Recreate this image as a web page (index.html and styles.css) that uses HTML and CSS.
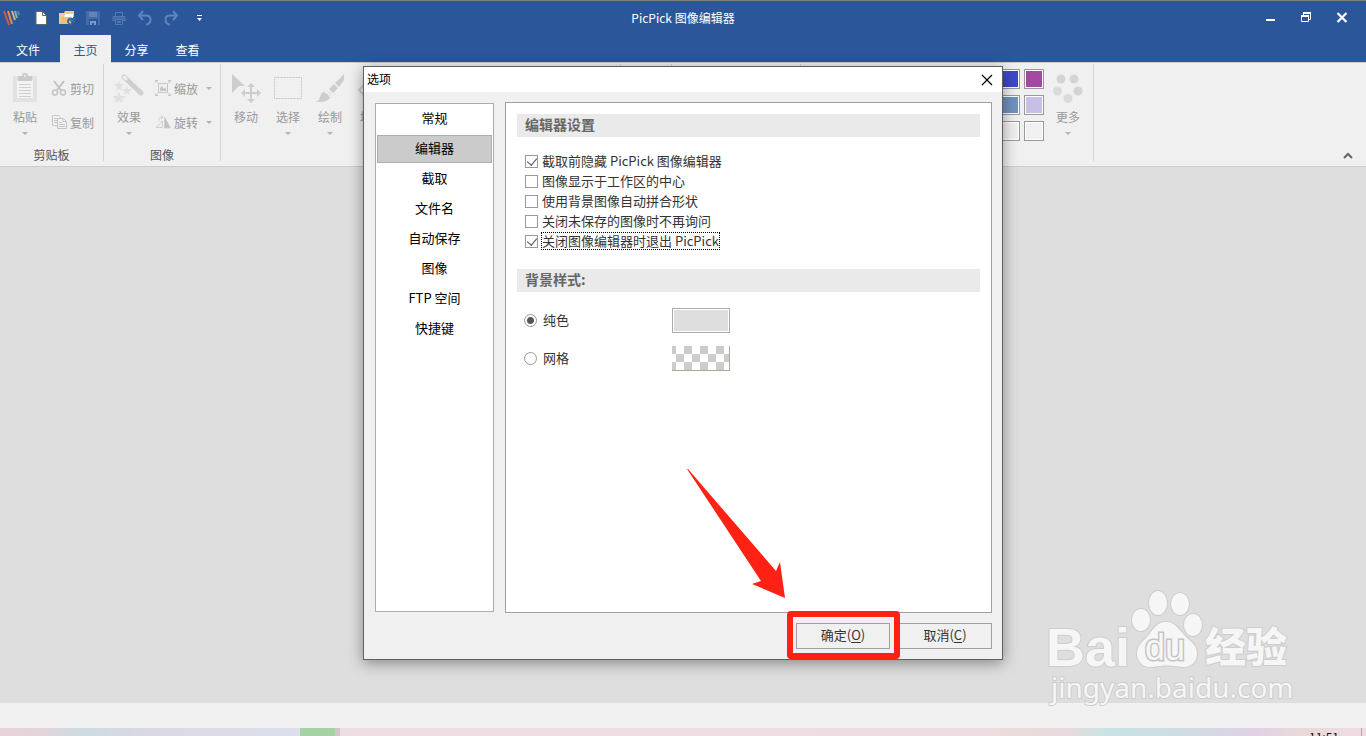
FILE: index.html
```html
<!DOCTYPE html>
<html lang="zh-CN">
<head>
    <meta charset="UTF-8">
    <meta name="viewport" content="width=device-width, initial-scale=1.0">
    <title>PicPick 图像编辑器</title>
    <link rel="stylesheet" href="styles.css">
</head>
<body>
    <header class="titlebar">
        <div class="quick-access">
            <svg class="app-logo" width="18" height="16" viewBox="0 0 18 16" fill="none" stroke-width="2">
                <path d="M2 1l5 14" stroke="#d9583b"/>
                <path d="M6 1l4 13" stroke="#e88a4a"/>
                <path d="M10 1l3 9" stroke="#c9b58c"/>
                <path d="M13 1l2 7" stroke="#7fb5a5"/>
                <path d="M16 1l1 4" stroke="#4f86b8"/>
            </svg>
            <button class="qa-btn" aria-label="新建"><svg width="16" height="16" viewBox="0 0 16 16"><path d="M3 1.500h6.500l4 4v9h-10.500z" fill="#fff" stroke="#666"/><path d="M9.500 1.500v4h4" fill="none" stroke="#666"/></svg></button>
            <button class="qa-btn" aria-label="打开"><svg width="18" height="16" viewBox="0 0 18 16"><path d="M1 14V3h5l1-2h9v6H5L2 14z" fill="#f1cd8a"/><path d="M7 4h8v4H6z" fill="#fff"/><path d="M5 7h9l-1 7H1z" fill="#eec17a"/><path d="M9 12c0-5 4-5 6-3l2-2v5h-5l1-1c-2-1-2 0-2 1 1 2 4 2 6 0-2 4-7 3-8 0z" fill="#2f6da8"/></svg></button>
            <button class="qa-btn" aria-label="保存"><svg width="16" height="16" viewBox="0 0 16 16"><path d="M1 1h14v14H1z" fill="#456ba9"/><path d="M4 2h8v5H4z" fill="#6283b8"/><path d="M4 9h9v6H4z" fill="#2b579a"/><path d="M5 11h6v4H9v-2H7v2H5z" fill="#7d9ac6"/></svg></button>
            <button class="qa-btn" aria-label="打印"><svg width="16" height="16" viewBox="0 0 16 16" fill="none" stroke="#5479b4"><path d="M4.500 6V2.500h7V6"/><path d="M2 6.500h12v4H2z" fill="#456ba9"/><path d="M4.500 9.500h7v5h-7z" fill="#2b579a"/><path d="M6 12h4" stroke-width="2"/></svg></button>
            <button class="qa-btn" aria-label="撤销"><svg width="16" height="16" viewBox="0 0 16 16" fill="none" stroke="#5f83bb" stroke-width="2"><path d="M6 1L2 5.500 6 10M2 5.500h7c6 0 6 8 0 9"/></svg></button>
            <button class="qa-btn" aria-label="重做"><svg width="16" height="16" viewBox="0 0 16 16" fill="none" stroke="#5f83bb" stroke-width="2"><path d="M10 1l4 4.500-4 4.500M14 5.500H7c-6 0-6 8 0 9"/></svg></button>
            <button class="qa-btn qa-more" aria-label="自定义快速访问工具栏"><svg width="7" height="7" viewBox="0 0 7 7" fill="#fff"><path d="M1 0h5v1H1zM1 3h5L3.500 6z"/></svg></button>
        </div>
        <h1 class="window-title">PicPick 图像编辑器</h1>
        <div class="window-buttons">
            <button class="win-btn" aria-label="最小化"><svg width="12" height="12" viewBox="0 0 12 12"><path d="M2 7h9v2H2z" fill="#fff"/></svg></button>
            <button class="win-btn" aria-label="还原"><svg width="12" height="12" viewBox="0 0 12 12" fill="none" stroke="#fff"><path d="M3.500 3V1.500h7v6H9"/><path d="M1.500 4.500h7v5h-7z"/><path d="M3 1h8M1 4h8" stroke-width="2"/></svg></button>
            <button class="win-btn" aria-label="关闭"><svg width="12" height="12" viewBox="0 0 12 12"><path d="M1.500 1l9 9M10.500 1l-9 9" stroke="#fff" stroke-width="2.200"/></svg></button>
        </div>
    </header>

    <nav class="tabs">
        <a href="#" class="tab tab-file">文件</a>
        <a href="#" class="tab active">主页</a>
        <a href="#" class="tab">分享</a>
        <a href="#" class="tab">查看</a>
    </nav>

    <section class="ribbon">
        <div class="group group-clipboard">
            <div class="controls">
                <button class="big-btn drop">
                    <svg width="28" height="30" viewBox="0 0 28 30"><path d="M2 3h24v26H2z" fill="#e2e2e2"/><path d="M6 7h16v18H6z" fill="#f3f3f3"/><path d="M7 3h4a3 3 0 0 1 6 0h4v5H7z" fill="#cacaca"/><circle cx="14" cy="3" r="1" fill="#f0f0f0"/><path d="M8 11.500h12M8 14.500h12M8 17.500h12M8 20.500h12M8 23.500h12" stroke="#cfcfcf"/></svg>
                    <span>粘贴</span>
                </button>
                <div class="small-col">
                    <button class="small-btn"><svg width="16" height="16" viewBox="0 0 16 16" fill="none" stroke="#c4c4c4" stroke-width="1.500"><path d="M3 1l7.500 10M13 1L5.500 11" stroke-width="2"/><circle cx="4" cy="12.500" r="2.500"/><circle cx="12" cy="12.500" r="2.500"/></svg>剪切</button>
                    <button class="small-btn"><svg width="16" height="16" viewBox="0 0 16 16" fill="#f3f3f3" stroke="#c4c4c4"><path d="M1.500 1.500h6l2 2v8h-8z"/><path d="M3 4.500h4M3 6.500h4M3 8.500h4"/><path d="M6.500 4.500h6l3 3v7h-9z"/><path d="M12 4.500v3h3M8 8.500h3M8 10.500h6M8 12.500h6"/></svg>复制</button>
                </div>
            </div>
            <div class="group-label">剪贴板</div>
        </div>
        <div class="group group-image">
            <div class="controls">
                <button class="big-btn drop">
                    <svg width="32" height="30" viewBox="0 0 32 30"><path d="M11 4L28 20" stroke="#cfcfcf" stroke-width="5" stroke-linecap="round"/><path d="M11 4l2 2" stroke="#f0f0f0" stroke-width="3" stroke-linecap="round"/><g fill="#e0e0e0"><path d="M6 7l1 4 4 0-3 3 1 4-3-2-3 2 1-4-3-3 4 0z"/><path d="M14 13l1 3 4 0-3 3 1 3-3-2-3 2 1-3-3-3 4 0z"/><path d="M6 19l2 4 5 0-4 3 1 4-4-2-4 2 1-4-4-3 5 0z"/></g></svg>
                    <span>效果</span>
                </button>
                <div class="small-col">
                    <button class="small-btn">
                        <svg width="16" height="16" viewBox="0 0 16 16" fill="none" stroke="#c6c6c6"><path d="M3.500 3.500h9v9h-9z"/><path d="M0 3V.5h3M0 0l3 3M16 3V.5h-3M16 0l-3 3M0 13v2.500h3M0 16l3-3M16 13v2.500h-3M16 16l-3-3"/><path d="M5 11V8l2-2 2 3 1-2 2 4z" fill="#c6c6c6" stroke="none"/></svg>缩放<i class="caret"></i>
                    </button>
                    <button class="small-btn">
                        <svg width="16" height="16" viewBox="0 0 16 16" fill="none" stroke="#cfcfcf"><path d="M1 13.500L7.500 7v6.500z"/><path d="M9.500 3l6 11h-6z" fill="#c0c0c0"/><path d="M4 7V5q0-2 4-2M6 1l2 2-2 2"/></svg>旋转<i class="caret"></i>
                    </button>
                </div>
            </div>
            <div class="group-label">图像</div>
        </div>
        <div class="group group-tools">
            <div class="controls">
                <button class="big-btn">
                    <svg width="30" height="30" viewBox="0 0 30 30"><path d="M1 1l13 12H8l-7 7z" fill="#cdcdcd"/><path d="M20 12v16M12 20h16" stroke="#cdcdcd" stroke-width="2"/><path d="M20 10l4 4h-8zM20 30l4-4h-8zM10 20l4-4v8zM30 20l-4-4v8z" fill="#cdcdcd"/></svg>
                    <span>移动</span>
                </button>
                <button class="big-btn drop">
                    <svg width="30" height="30" viewBox="0 0 30 30"><path d="M1.500 4.500h27v21h-27z" fill="none" stroke="#c4c4c4" stroke-dasharray="2 1"/></svg>
                    <span>选择</span>
                </button>
                <button class="big-btn drop">
                    <svg width="30" height="30" viewBox="0 0 30 30" fill="#cdcdcd"><path d="M29 1v6l-5 7-4-4zM19 11l4 4-5 5-4-4z"/><path d="M1 29c5-2 3-6 6-9 5-4 12 1 8 5-3 4-8 4-14 4z"/><path d="M10 19q5 1 5 5" fill="none" stroke="#f0f0f0" stroke-width="2"/></svg>
                    <span>绘制</span>
                </button>
                <button class="big-btn">
                    <svg width="30" height="30" viewBox="0 0 30 30"><path d="M2 17L13 6l10 10-11 11z" fill="none" stroke="#cdcdcd" stroke-width="2"/></svg>
                    <span>填充</span>
                </button>
            </div>
        </div>
        <div class="group group-size"></div>
        <div class="group group-style"></div>
        <div class="group group-colors">
            <div class="controls">
                <div class="palette">
                    <button class="swatch blue" aria-label="蓝色"></button>
                    <button class="swatch purple" aria-label="紫色"></button>
                    <button class="swatch steel" aria-label="灰蓝色"></button>
                    <button class="swatch lavender" aria-label="淡紫色"></button>
                    <button class="swatch" aria-label="自定义 1"></button>
                    <button class="swatch" aria-label="自定义 2"></button>
                </div>
                <button class="big-btn drop">
                    <svg width="30" height="30" viewBox="0 0 30 30" fill="#d4d4d4"><circle cx="8" cy="6" r="4.500"/><circle cx="21" cy="6" r="4.500"/><circle cx="4.500" cy="18" r="4.500" fill="#dbdbdb"/><circle cx="25" cy="18" r="4.500"/><circle cx="15" cy="25.500" r="4.500" fill="#dbdbdb"/></svg>
                    <span>更多</span>
                </button>
            </div>
        </div>
        <button class="collapse-btn" aria-label="折叠功能区"><svg width="10" height="7" viewBox="0 0 10 7"><path d="M1 6l4-4 4 4" fill="none" stroke="#666" stroke-width="2"/></svg></button>
    </section>

    <main class="workspace">
        <svg class="watermark" width="260" height="130" viewBox="0 0 260 130">
            <text class="wm-bai" x="4" y="84">Bai</text>
            <g class="wm-paw">
                <ellipse cx="99" cy="38" rx="9" ry="11"/>
                <ellipse cx="116" cy="21" rx="9" ry="12"/>
                <ellipse cx="138" cy="22" rx="9" ry="11"/>
                <ellipse cx="151" cy="43" rx="9" ry="11"/>
                <path d="M124 40c10 0 13 8 20 15 7 6 11 9 11 17 0 9-8 14-16 13-10-2-18-2-28 0-8 1-16-4-16-13 0-8 4-11 10-17 6-7 9-15 19-15z"/>
            </g>
            <text class="wm-du" x="103" y="78">du</text>
            <text class="wm-cn" x="163" y="80">经验</text>
            <text class="wm-url" x="9" y="116">jingyan.baidu.com</text>
        </svg>
    </main>

    <footer class="statusbar"></footer>
    <div class="taskbar">
        <span class="task-item"></span>
        <span class="clock">11:51</span>
    </div>

    <div class="overlay">
        <div class="dialog" role="dialog" aria-labelledby="dialogTitle">
            <div class="dialog-title">
                <h2 id="dialogTitle">选项</h2>
                <button class="dialog-close" aria-label="关闭"><svg width="12" height="12" viewBox="0 0 12 12"><path d="M1 1l10 10M11 1L1 11" stroke="#000" stroke-width="1.200"/></svg></button>
            </div>
            <div class="dialog-body">
                <nav class="side-nav">
                    <button class="nav-item">常规</button>
                    <button class="nav-item selected">编辑器</button>
                    <button class="nav-item">截取</button>
                    <button class="nav-item">文件名</button>
                    <button class="nav-item">自动保存</button>
                    <button class="nav-item">图像</button>
                    <button class="nav-item">FTP 空间</button>
                    <button class="nav-item">快捷键</button>
                </nav>
                <div class="panel">
                    <h3 class="section-title">编辑器设置</h3>
                    <div class="checks">
                        <label class="check"><input type="checkbox" checked><span>截取前隐藏 PicPick 图像编辑器</span></label>
                        <label class="check"><input type="checkbox"><span>图像显示于工作区的中心</span></label>
                        <label class="check"><input type="checkbox"><span>使用背景图像自动拼合形状</span></label>
                        <label class="check"><input type="checkbox"><span>关闭未保存的图像时不再询问</span></label>
                        <label class="check focused"><input type="checkbox" checked><span>关闭图像编辑器时退出 PicPick</span></label>
                    </div>
                    <h3 class="section-title">背景样式:</h3>
                    <div class="backgrounds">
                        <label class="radio"><input type="radio" name="background" checked><span>纯色</span></label>
                        <button class="preview solid" aria-label="选择颜色"></button>
                        <label class="radio"><input type="radio" name="background"><span>网格</span></label>
                        <div class="preview grid"></div>
                    </div>
                </div>
            </div>
            <div class="dialog-actions">
                <div class="ok-wrap">
                    <button class="action-btn">确定(<u>O</u>)</button>
                    <div class="highlight"></div>
                </div>
                <button class="action-btn">取消(<u>C</u>)</button>
            </div>
            <svg class="arrow" width="102" height="132" viewBox="0 0 102 132"><path d="M1 1L2 1L90 103L94 94L99 130L66 116L75 113Z" fill="#ff2113"/></svg>
        </div>
    </div>
</body>
</html>
```

FILE: styles.css
```css
* {
    margin: 0;
    padding: 0;
    box-sizing: border-box;
}

body {
    font-family: "Noto Sans CJK SC", sans-serif;
    font-size: 12px;
    min-height: 100vh;
    display: flex;
    flex-direction: column;
    background: #dedede;
    overflow: hidden;
}

button {
    font-family: inherit;
    font-size: inherit;
    color: inherit;
    background: none;
    border: none;
}

svg {
    display: block;
    flex-shrink: 0;
}

/* Title bar */
.titlebar {
    height: 35px;
    display: grid;
    grid-template-columns: 1fr auto 1fr;
    align-items: center;
    background: #2b579a;
    border-top: 1px solid #808080;
    color: #fff;
}

.quick-access {
    display: flex;
    align-items: center;
    padding-left: 2px;
}

.app-logo {
    margin-right: 8px;
}

.qa-btn {
    width: 26px;
    height: 24px;
    display: flex;
    align-items: center;
    justify-content: center;
}

.qa-more {
    width: 30px;
}

.window-title {
    font-size: 12px;
    font-weight: normal;
    line-height: 18px;
}

.window-buttons {
    display: flex;
    justify-content: flex-end;
    padding-right: 6px;
}

.win-btn {
    width: 36px;
    height: 24px;
    display: flex;
    align-items: center;
    justify-content: center;
}

/* Tabs */
.tabs {
    height: 27px;
    display: flex;
    background: #2b579a;
}

.tab {
    width: 51px;
    line-height: 30px;
    color: #fff;
    text-align: center;
    text-decoration: none;
}

.tab-file {
    width: 56px;
    margin-right: 4px;
}

.tab.active {
    height: 28px;
    background: #f0f0f0;
    color: #2b579a;
    position: relative;
}

/* Ribbon */
.ribbon {
    height: 105px;
    display: flex;
    background: #f0f0f0;
    border-top: 1px solid #d0ccd0;
    border-bottom: 1px solid #cdcdcd;
    color: #999;
}

.group {
    height: 97px;
    margin-top: 1px;
    padding: 0 4px;
    flex-shrink: 0;
    display: flex;
    flex-direction: column;
    justify-content: space-between;
    border-right: 1px solid #d4d4d4;
}

.group-clipboard {
    width: 104px;
}

.group-image {
    width: 117px;
}

.group-tools {
    width: 400px;
}

.group-size {
    width: 51px;
}

.group-style {
    width: 129px;
}

.group-colors {
    width: 293px;
}

.group-colors .controls {
    justify-content: flex-end;
}

.controls {
    display: flex;
}

.group-label {
    line-height: 12px;
    color: #555;
    text-align: center;
}

.big-btn {
    width: 42px;
    height: 76px;
    padding-top: 9px;
    flex-shrink: 0;
    display: flex;
    flex-direction: column;
    align-items: center;
}

.big-btn span {
    margin-top: 5px;
    line-height: 18px;
}

.drop::after,
.caret {
    content: "";
    border: 3px solid transparent;
    border-top-color: #b4b4b4;
    border-bottom: none;
}

.drop::after {
    margin-top: 6px;
}

.small-col {
    display: flex;
    flex-direction: column;
    gap: 10px;
    padding-top: 12px;
    padding-left: 5px;
}

.small-btn {
    height: 24px;
    display: flex;
    align-items: center;
    gap: 3px;
    white-space: nowrap;
}

.caret {
    margin-left: 5px;
}

.palette {
    display: grid;
    grid-template-columns: 20px 20px;
    grid-auto-rows: 20px;
    gap: 6px 4px;
    padding-top: 5px;
    margin-right: 3px;
}

.swatch {
    border: 1px solid #999;
    box-shadow: inset 0 0 0 1px #fff;
}

.blue {
    background: #3f48cc;
}

.purple {
    background: #a349a4;
}

.steel {
    background: #7092be;
}

.lavender {
    background: #c8bfe7;
}

.collapse-btn {
    margin-left: auto;
    padding: 0 13px 7px;
    align-self: flex-end;
}

/* Workspace */
.workspace {
    flex: 1;
    position: relative;
}

.watermark {
    position: absolute;
    right: 64px;
    bottom: -9px;
    fill: #f6f6f6;
    stroke: #cdcdcd;
    stroke-width: 2px;
    paint-order: stroke;
    z-index: 1;
}

.wm-bai {
    font: bold 54px "Liberation Sans", sans-serif;
}

.wm-du {
    font: 36px "Liberation Sans", sans-serif;
    stroke: #c4c4c4;
    stroke-width: 3px;
}

.wm-cn {
    font: 900 41px "Noto Sans CJK SC", sans-serif;
}

.wm-url {
    font: 28px "Noto Sans", sans-serif;
}

.statusbar {
    height: 25px;
    background: #f0f0f0;
}

.taskbar {
    height: 8px;
    display: flex;
    justify-content: space-between;
    overflow: hidden;
    background: linear-gradient(90deg, #e8d3d8 0, #e3d5db 3%, #cddce2 6%, #dad8e4 11%, #dddfec 22%, #eedee2 25%, #eedde0 70%, #e8dadc 78%, #c8e3e4 81%, #d0dce4 87%, #e2d1e5 92%, #e8d8dc 95%, #efdce0 100%);
}

.task-item {
    width: 40px;
    margin-left: 300px;
    background: #a5d2a3;
    border-right: 5px solid #d2c5cc;
}

.clock {
    padding-right: 22px;
    border-right: 1px solid #b0a8ac;
    margin-right: 4px;
    line-height: 18px;
    color: #111;
}

/* Options dialog */
.overlay {
    position: absolute;
    inset: 0;
    padding-top: 66px;
    display: flex;
    justify-content: center;
    align-items: flex-start;
}

.dialog {
    width: 640px;
    position: relative;
    background: #f0f0f0;
    border: 1px solid #606060;
    box-shadow: 0 3px 14px rgba(0, 0, 0, 0.4);
    font-size: 13px;
    color: #333;
}

.dialog-title {
    height: 25px;
    padding: 0 9px 0 3px;
    display: flex;
    align-items: center;
    justify-content: space-between;
    background: #fff;
    color: #000;
}

.dialog-title h2 {
    padding-bottom: 2px;
    font-size: 12px;
    font-weight: normal;
}

.dialog-body {
    display: flex;
    gap: 11px;
    padding: 10px 10px 10px 11px;
}

.side-nav {
    width: 119px;
    margin: 1px 0;
    padding: 1px;
    display: flex;
    flex-direction: column;
    gap: 2px;
    background: #fff;
    border: 1px solid #acacac;
}

.nav-item {
    height: 28px;
    padding-bottom: 4px;
    color: #000;
}

.nav-item.selected {
    background: #cbcbcb;
    border: 1px solid #acacac;
}

.panel {
    flex: 1;
    height: 511px;
    padding: 11px;
    background: #fff;
    border: 1px solid #a0a0a0;
}

.section-title {
    height: 23px;
    padding-left: 8px;
    background: #eaeaea;
    font-size: 14px;
    line-height: 20px;
    color: #666;
}

.checks {
    padding: 14px 8px 18px;
}

.check {
    height: 20px;
    display: flex;
    align-items: center;
    gap: 3px;
}

.check span {
    line-height: 16px;
    border: 1px solid transparent;
}

.check.focused span {
    border: 1px dotted #000;
}

.check input,
.radio input {
    appearance: none;
    width: 13px;
    height: 13px;
    background: #fff;
    border: 1px solid #999;
}

.check input:checked {
    position: relative;
}

.check input:checked::after {
    content: "";
    position: absolute;
    left: 3px;
    top: 0;
    width: 5px;
    height: 8px;
    border: solid #555;
    border-width: 0 1px 1px 0;
    transform: rotate(40deg);
}

.backgrounds {
    display: grid;
    grid-template-columns: 148px 58px;
    gap: 13px 0;
    padding: 16px 7px;
}

.radio {
    display: flex;
    align-items: center;
    gap: 6px;
}

.radio span {
    padding-bottom: 3px;
}

.radio input {
    border-radius: 50%;
}

.radio input:checked {
    background: radial-gradient(circle, #555 0 3px, #fff 4px);
}

.preview {
    height: 25px;
}

.solid {
    background: #dedede;
    border: 1px solid #aaa;
    box-shadow: inset 0 0 0 1px #fff;
}

.preview.grid {
    background: repeating-conic-gradient(#fff 0 25%, #ccc 0 50%) -4px 0 / 16px 16px;
    border-right: 1px solid #a9a99c;
    border-bottom: 1px solid #a9a99c;
}

.dialog-actions {
    display: flex;
    justify-content: flex-end;
    gap: 8px;
    padding: 0 10px 10px;
}

.ok-wrap {
    position: relative;
}

.action-btn {
    display: block;
    width: 94px;
    height: 26px;
    padding-bottom: 3px;
    border: 1px solid #a0a0a0;
}

.action-btn u {
    text-underline-offset: 2px;
}

/* Red marks over the OK button */
.highlight {
    position: absolute;
    inset: -12px -10px -10px -9px;
    border: 6px solid #ff2113;
    border-radius: 4px;
    z-index: 1;
}

.arrow {
    position: absolute;
    left: 322px;
    top: 401px;
}
```
